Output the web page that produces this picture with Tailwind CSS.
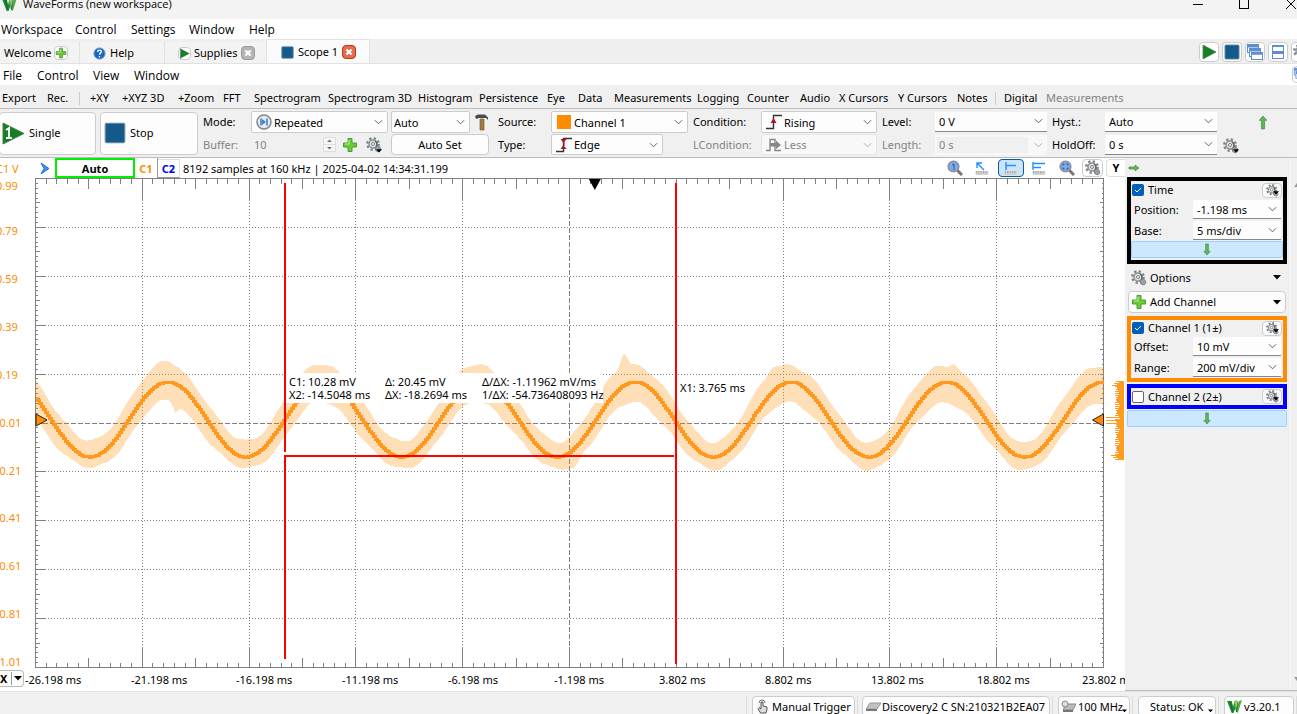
<!DOCTYPE html>
<html lang="en">
<head>
    <meta charset="UTF-8">
    <meta name="viewport" content="width=device-width, initial-scale=1.0">
    <title>WaveForms (new workspace)</title>
    <script src="https://cdn.jsdelivr.net/npm/@tailwindcss/browser@4"></script>
</head>
<body class="h-screen flex flex-col overflow-hidden bg-[#f0f0f0] text-black text-[11px] leading-4 font-['Noto_Sans',sans-serif] whitespace-nowrap">

    <!-- shared icons -->
    <svg class="hidden">
        <symbol id="chev" viewBox="0 0 10 6"><path d="M1 1l4 4 4-4" fill="none" stroke="#555" stroke-width="1"/></symbol>
        <symbol id="gear" viewBox="0 0 16 16">
            <g fill="none" stroke="#7d8488" stroke-width="2.6"><circle cx="7" cy="7" r="5.6" stroke-dasharray="2.2 2.2"/></g>
            <circle cx="7" cy="7" r="4" fill="#dfe3e4" stroke="#8f9699" stroke-width="1.6"/>
            <path d="M9 4a4 4 0 0 1 1 6" fill="none" stroke="#5c6367" stroke-width="1.4"/>
            <circle cx="7" cy="7" r="1.5" fill="#fff" stroke="#777e82"/>
            <path d="M11 9l3 1 1 3-2 2-3-1-1-3z" fill="#9aa1a4" stroke="#6a7175" stroke-width=".7"/>
        </symbol>
        <symbol id="drop" viewBox="0 0 8 5"><path d="M0 0h8L4 4.6z" fill="#000"/></symbol>
        <symbol id="plus" viewBox="0 0 16 16"><path d="M6 1.500h4V6h4.500v4H10v4.500H6V10H1.500V6H6z" fill="#6cc93a" stroke="#4a9e2a" stroke-width="1"/><path d="M7 3v4H3" fill="none" stroke="#b9eb92" stroke-width="1.200"/></symbol>
        <symbol id="play" viewBox="0 0 16 16"><path d="M2 1l13 7-13 7z" fill="#128023" stroke="#5a7d5c" stroke-width=".8"/></symbol>
        <symbol id="stop" viewBox="0 0 16 16"><rect x="1" y="1" width="14" height="14" rx="1" fill="#135a8a" stroke="#5f87a2" stroke-width="1"/></symbol>
        <symbol id="down" viewBox="0 0 8 14"><path d="M2.500 1h3v8h2L4 13 .5 9h2z" fill="#63b35a" stroke="#469145" stroke-width=".7"/></symbol>
        <symbol id="cross" viewBox="0 0 14 14"><path d="M4 4l6 6M10 4l-6 6" stroke="#fff" stroke-width="2.400"/></symbol>
        <symbol id="lens" viewBox="0 0 16 16"><path d="M10 10l5 5" stroke="#777" stroke-width="3"/><circle cx="6.500" cy="6.500" r="5.300" fill="#7eaae6" stroke="#8d9299" stroke-width="1.600"/></symbol>
        <symbol id="ruler" viewBox="0 0 16 5"><rect width="16" height="5" fill="#d3d3d3"/><path d="M1 0v3M4 0v3M7 0v3M10 0v3M13 0v3" stroke="#999"/></symbol>
        <symbol id="logo" viewBox="0 0 16 16"><path d="M0 2h5l1.500 6L8 3l3 1-4 11H5z" fill="#1f8a3c"/><path d="M7 5l2.500 8 2 2L16 1l-3 1-2 7z" fill="#4fae4a"/><path d="M7 2l4-1 1 4-2 4z" fill="#95cc5a"/><path d="M3 2l3 11M12 3l-2 11" stroke="#0d5a2a" stroke-width=".8"/></symbol>
        <symbol id="cascade" viewBox="0 0 18 18"><g fill="#fff" stroke="#5d8fd0" stroke-width="1"><rect x="1.500" y="1.500" width="11" height="8"/><path d="M1.500 3h11" stroke-width="3"/><rect x="3.500" y="5.500" width="11" height="8"/><path d="M3.500 7h11" stroke-width="3"/><rect x="5.500" y="9.500" width="11" height="7"/><path d="M5.500 10.500h11" stroke-width="2.500"/></g></symbol>
    </svg>

    <!-- title bar -->
    <header class="h-[19px] shrink-0 overflow-hidden bg-[#f3f3f3]">
        <div class="h-[30px] -mt-[11px] flex items-center pl-[2px]">
            <svg class="size-[15px] mr-[6px]"><use href="#logo"/></svg>
            <span class="font-['Open_Sans',sans-serif]">WaveForms (new workspace)</span>
            <div class="ml-auto flex items-center gap-[35px]">
                <button aria-label="Minimize"><svg width="11" height="12"><path d="M0 6.500h10" stroke="#000"/></svg></button>
                <button aria-label="Maximize"><svg width="11" height="12"><rect x=".5" y="1.500" width="9" height="9" fill="none" stroke="#000"/></svg></button>
                <button aria-label="Close"><svg width="12" height="12"><path d="M1 1l10 10M11 1L1 11" stroke="#000"/></svg></button>
            </div>
        </div>
    </header>

    <nav class="h-[20px] shrink-0 bg-white flex items-center text-[12px] pl-px pt-[2px] font-['Open_Sans',sans-serif]">
        <button class="w-[74px] text-left">Workspace</button>
        <button class="w-[56px] text-left">Control</button>
        <button class="w-[58px] text-left">Settings</button>
        <button class="w-[60px] text-left">Window</button>
        <button>Help</button>
    </nav>

    <!-- document tabs -->
    <div class="h-[25px] shrink-0 bg-[#efefef] border-b border-[#e2e2e2] flex items-end">
        <button class="w-[80px] h-[21px] flex items-center gap-[3px] pl-[4px] pt-px bg-[#f3f3f3] border-r border-[#e2e2e2]">Welcome
            <span class="size-[14px] bg-white border border-[#ccc] rounded-sm"><svg class="size-full"><use href="#plus"/></svg></span>
        </button>
        <button class="w-[85px] h-[21px] flex items-center gap-[4px] pl-[13px] pt-px bg-[#f3f3f3] border-r border-[#e2e2e2]">
            <svg class="size-[13px]" viewBox="0 0 14 14"><circle cx="7" cy="7" r="6.200" fill="#1b66c4" stroke="#9db9dc"/><path d="M5 5.500c0-3 4-2.600 4-.3C9 6.700 7 6.600 7 8.300M7 9.600v1.400" stroke="#fff" stroke-width="1.500" fill="none"/></svg>Help
        </button>
        <button class="w-[101px] h-[21px] flex items-center gap-[3px] pl-[13px] pt-px bg-[#f3f3f3]">
            <span class="size-[13px] bg-white border border-[#ccc] rounded-sm"><svg class="size-full"><use href="#play"/></svg></span>Supplies
            <svg class="size-[14px] bg-[#b5b5b5] border border-[#999] rounded-sm"><use href="#cross"/></svg>
        </button>
        <button class="w-[104px] h-[24px] flex items-center gap-[4px] pl-[14px] pt-px bg-[#fafafa] border border-b-0 border-[#e2e2e2]">
            <svg class="size-[13px]"><use href="#stop"/></svg>Scope 1
            <svg class="size-[14px] bg-[#e0704c] border border-[#c9301c] rounded-sm"><use href="#cross"/></svg>
        </button>
        <div class="ml-auto mb-px flex gap-[3px] -mr-[14px]">
            <button aria-label="Run all" class="size-5 p-px bg-white border border-[#ccc] rounded"><svg class="size-full"><use href="#play"/></svg></button>
            <button aria-label="Stop all" class="size-5 p-px bg-white border border-[#ccc] rounded"><svg class="size-full"><use href="#stop"/></svg></button>
            <button aria-label="Cascade" class="size-5 bg-white border border-[#ccc] rounded"><svg class="size-full"><use href="#cascade"/></svg></button>
            <button aria-label="Tile" class="size-5 bg-white border border-[#ccc] rounded"><svg class="size-full" viewBox="0 0 18 18"><g fill="#fff" stroke="#5d8fd0"><rect x="3.500" y="2.500" width="11" height="6"/><rect x="3.500" y="9.500" width="11" height="6"/><path d="M3 3h12M3 10h12" stroke-width="2"/></g></svg></button>
            <button aria-label="Options" class="size-5 p-px bg-white border border-[#ccc] rounded"><svg class="size-full"><use href="#gear"/></svg></button>
        </div>
    </div>

    <nav class="h-[22px] shrink-0 bg-white border-b border-[#f0f0f0] flex items-center text-[12px] pl-[3px] pt-[3px] font-['Open_Sans',sans-serif]">
        <button class="w-[34px] text-left">File</button>
        <button class="w-[56px] text-left">Control</button>
        <button class="w-[41px] text-left">View</button>
        <button>Window</button>
        <button aria-label="Undock" class="ml-auto -mr-[12px] mb-[3px] size-[17px] bg-white border border-[#ccc] rounded"><svg class="size-full"><use href="#cascade"/></svg></button>
    </nav>

    <!-- view toolbar -->
    <div class="h-[23px] shrink-0 border-b border-[#bbb] flex items-center pl-[2px] pt-[2px]">
        <button class="w-[45px] text-left">Export</button>
        <button class="w-[32px] text-left">Rec.</button>
        <span class="w-[11px] h-[13px] border-l border-[#ccc]"></span>
        <button class="w-[32px] text-left">+XY</button>
        <button class="w-[56px] text-left">+XYZ 3D</button>
        <button class="w-[45px] text-left">+Zoom</button>
        <button class="w-[31px] text-left">FFT</button>
        <button class="w-[74px] text-left">Spectrogram</button>
        <button class="w-[90px] text-left">Spectrogram 3D</button>
        <button class="w-[61px] text-left">Histogram</button>
        <button class="w-[68px] text-left">Persistence</button>
        <button class="w-[31px] text-left">Eye</button>
        <button class="w-[36px] text-left">Data</button>
        <button class="w-[83px] text-left">Measurements</button>
        <button class="w-[50px] text-left">Logging</button>
        <button class="w-[53px] text-left">Counter</button>
        <button class="w-[39px] text-left">Audio</button>
        <button class="w-[59px] text-left">X Cursors</button>
        <button class="w-[59px] text-left">Y Cursors</button>
        <button class="w-[38px] text-left">Notes</button>
        <span class="w-[9px] h-[13px] border-l border-[#ccc]"></span>
        <button class="w-[42px] text-left">Digital</button>
        <button class="text-[#838383]" disabled>Measurements</button>
    </div>

    <!-- acquisition and trigger controls -->
    <div class="h-[49px] shrink-0 border-b border-[#bbb] flex items-center">
        <button class="w-[97px] -ml-px h-[43px] flex items-center gap-[4px] pl-[2px] bg-[#fdfdfd] border border-[#ccc] rounded">
            <svg class="size-[23px]" viewBox="0 0 23 23"><path d="M1 1l21 10.500L1 22z" fill="#128023" stroke="#4d7850"/><path d="M4 8l3-2v10M4 16h6" stroke="#fff" stroke-width="2" fill="none"/></svg>Single
        </button>
        <button class="w-[98px] ml-[4px] h-[43px] flex items-center gap-[4px] pl-[3px] bg-[#fdfdfd] border border-[#ccc] rounded">
            <svg class="size-[22px]"><use href="#stop"/></svg>Stop
        </button>

        <div class="ml-[5px] grid grid-cols-[48px_137px] gap-y-px items-center">
            <label for="mode">Mode:</label>
            <div class="relative h-[22px] flex items-center pl-[4px] bg-[#fdfdfd] border border-[#ccc] rounded-xs">
                <svg class="size-4 shrink-0" viewBox="0 0 16 16"><circle cx="8" cy="8" r="7" fill="#e3ecf7" stroke="#80868c" stroke-width="1.500"/><path d="M5 4.500v7M11 4.500v7" stroke="#4a7fc0" stroke-width="1.600"/><path d="M6 5l4 3-4 3z" fill="#4a7fc0"/></svg>
                <select id="mode" class="appearance-none w-full h-full pl-[2px] pt-px"><option>Repeated</option></select>
                <svg class="absolute right-[4px] w-[9px] h-[6px] pointer-events-none"><use href="#chev"/></svg>
            </div>
            <label for="buffer" class="text-[#838383]">Buffer:</label>
            <div class="h-[21px] flex items-center">
                <input id="buffer" value="10" disabled class="w-[72px] pl-[3px] pt-px text-[#838383]">
                <svg class="w-[13px] h-[15px] mr-[6px] shrink-0" viewBox="0 0 13 15"><rect x=".5" y=".5" width="12" height="14" fill="#f6f6f6" stroke="#ddd"/><path d="M0 7.500h13" stroke="#ddd"/><path d="M4 5h5L6.500 2.500zM4 10h5l-2.500 2.500z" fill="#777"/></svg>
                <button aria-label="Add buffer"><svg class="size-4"><use href="#plus"/></svg></button>
                <button aria-label="Buffer options" class="ml-[8px] -mr-2 relative"><svg class="size-4"><use href="#gear"/></svg><svg class="absolute right-0 bottom-0 w-[6px] h-[4px]"><use href="#drop"/></svg></button>
            </div>
        </div>

        <div class="ml-[3px] flex flex-col gap-px">
            <div class="flex items-center">
                <div class="relative w-[79px] h-[22px] bg-[#fdfdfd] border border-[#ccc] rounded-xs flex items-center">
                    <select aria-label="Acquisition trigger" class="appearance-none w-full h-full pl-[2px] pt-px"><option>Auto</option></select>
                    <svg class="absolute right-[4px] w-[9px] h-[6px] pointer-events-none"><use href="#chev"/></svg>
                </div>
                <svg class="w-[13px] h-[17px] ml-[5px]" viewBox="0 0 13 17"><path d="M5 5h4v11H5z" fill="#a07c45" stroke="#7b5c30" stroke-width=".7"/><path d="M0 2l3-1.500h7l3 3V6l-2-2H4L1 5z" fill="#4b4b4b"/></svg>
            </div>
            <button class="w-[98px] h-[21px] bg-[#fdfdfd] border border-[#ccc] rounded">Auto Set</button>
        </div>

        <div class="ml-[9px] grid grid-cols-[53px_137px] gap-y-px items-center">
            <label for="source">Source:</label>
            <div class="relative h-[22px] flex items-center pl-[5px] bg-[#fdfdfd] border border-[#ccc] rounded-xs">
                <span class="size-[14px] shrink-0 bg-[#ff8c00]"></span>
                <select id="source" class="appearance-none w-full h-full pl-[3px] pt-px"><option>Channel 1</option></select>
                <svg class="absolute right-[4px] w-[9px] h-[6px] pointer-events-none"><use href="#chev"/></svg>
            </div>
            <label for="type">Type:</label>
            <div class="relative w-[112px] h-[21px] flex items-center pl-[4px] bg-[#fdfdfd] border border-[#ccc] rounded-xs">
                <svg class="size-4 shrink-0" viewBox="0 0 16 16"><path d="M0 14.500h7.500V1.500H16" fill="none" stroke="#333" stroke-width="1.400"/><path d="M4.500 2h6l-3 4zM4.500 12h6l-3-4zM7 4h1.500v6H7z" fill="#b31224"/></svg>
                <select id="type" class="appearance-none w-full h-full pl-[2px] pt-px"><option>Edge</option></select>
                <svg class="absolute right-[4px] w-[9px] h-[6px] pointer-events-none"><use href="#chev"/></svg>
            </div>
        </div>

        <div class="ml-[5px] grid grid-cols-[68px_116px] gap-y-px items-center">
            <label for="cond">Condition:</label>
            <div class="relative h-[22px] flex items-center pl-[4px] bg-[#fdfdfd] border border-[#ccc] rounded-xs">
                <svg class="size-4 shrink-0" viewBox="0 0 16 16"><path d="M0 14.500h7.500V1.500H16" fill="none" stroke="#333" stroke-width="1.400"/><path d="M4.500 9h6l-3-5z" fill="#b31224"/></svg>
                <select id="cond" class="appearance-none w-full h-full pl-[2px] pt-px"><option>Rising</option></select>
                <svg class="absolute right-[4px] w-[9px] h-[6px] pointer-events-none"><use href="#chev"/></svg>
            </div>
            <label for="lcond" class="text-[#838383]">LCondition:</label>
            <div class="relative h-[21px] flex items-center pl-[4px] bg-[#f8f8f8] border border-[#e6e6e6] rounded-xs text-[#838383]">
                <svg class="size-4 shrink-0" viewBox="0 0 16 16"><path d="M0 13.500h4v-11h5v11h6" fill="none" stroke="#888" stroke-width="1.400"/><path d="M4 6h6V3.500L15 8l-5 4V9.500H4z" fill="#888"/></svg>
                <select id="lcond" disabled class="appearance-none w-full h-full pl-[2px] pt-px"><option>Less</option></select>
                <svg class="absolute right-[4px] w-[9px] h-[6px] pointer-events-none opacity-50"><use href="#chev"/></svg>
            </div>
        </div>

        <div class="ml-[5px] grid grid-cols-[53px_112px] gap-y-[3px] items-center">
            <label for="level">Level:</label>
            <div class="relative h-[20px] flex items-center bg-[#fdfdfd] border-b border-[#888]">
                <select id="level" class="appearance-none w-full h-full pl-[4px] pt-[2px]"><option>0 V</option></select>
                <svg class="absolute right-[4px] w-[9px] h-[6px] pointer-events-none"><use href="#chev"/></svg>
            </div>
            <label for="length" class="text-[#838383]">Length:</label>
            <div class="relative h-[20px] flex items-center p-[2px] bg-[#f8f8f8] text-[#838383]">
                <select id="length" disabled class="appearance-none w-[91px] h-full pl-[2px] bg-[#f0f0f0]"><option>0 s</option></select>
                <svg class="absolute right-[4px] w-[9px] h-[6px] pointer-events-none opacity-50"><use href="#chev"/></svg>
            </div>
        </div>

        <div class="ml-[5px] grid grid-cols-[53px_112px] gap-y-[3px] items-center">
            <label for="hyst">Hyst.:</label>
            <div class="relative h-[20px] flex items-center bg-[#fdfdfd] border-b border-[#888]">
                <select id="hyst" class="appearance-none w-full h-full pl-[4px] pt-[2px]"><option>Auto</option></select>
                <svg class="absolute right-[4px] w-[9px] h-[6px] pointer-events-none"><use href="#chev"/></svg>
            </div>
            <label for="holdoff">HoldOff:</label>
            <div class="relative h-[20px] flex items-center bg-[#fdfdfd] border-b border-[#888]">
                <select id="holdoff" class="appearance-none w-full h-full pl-[4px] pt-[2px]"><option>0 s</option></select>
                <svg class="absolute right-[4px] w-[9px] h-[6px] pointer-events-none"><use href="#chev"/></svg>
            </div>
        </div>
        <button aria-label="Trigger options" class="ml-[6px] mb-[3px] relative self-end"><svg class="size-4"><use href="#gear"/></svg><svg class="absolute right-0 bottom-px w-[6px] h-[4px]"><use href="#drop"/></svg></button>
        <button aria-label="Collapse" class="ml-[19px] mt-[6px] self-start"><svg class="w-[10px] h-[15px] rotate-180"><use href="#down"/></svg></button>
    </div>

    <main class="flex-1 min-h-0 flex">
        <!-- scope view -->
        <section class="flex-1 min-w-0 flex flex-col bg-white">
            <div class="h-5 shrink-0 flex items-center">
                <span class="w-[44px] -ml-[4px] pt-px text-[#ff8c00]">C1 V</span>
                <svg class="w-[10px] h-[13px] mr-[5px]" viewBox="0 0 10 13"><path d="M1 1l3 5.500L1 12l8-5.500z" fill="#3f8ff0" stroke="#1f6fd6"/></svg>
                <div class="w-[80px] h-5 pt-px border-2 border-[#00f000] text-center font-bold font-['Open_Sans',sans-serif]">Auto</div>
                <button class="w-[23px] h-5 pt-px font-bold text-[#ff8c00] border-r border-[#999]">C1</button>
                <button class="w-[22px] h-[19px] pt-px font-bold text-[#0000ee] border border-l-0 border-[#ddd] border-b-[#999] leading-4">C2</button>
                <span class="ml-[3px] pt-px">8192 samples at 160 kHz | 2025-04-02 14:34:31.199</span>
                <div class="ml-auto flex items-center">
                    <button aria-label="Zoom one" class="w-[28px]"><svg class="size-4" viewBox="0 0 16 16"><use href="#lens"/><path d="M5 5l2-1v6" stroke="#2a50a8" fill="none"/></svg></button>
                    <button aria-label="Free cursor" class="w-[23px]"><svg class="w-[14px] h-[13px]" viewBox="0 0 14 13"><path d="M2 1l7 7M2 6V1h5" stroke="#1e90ff" stroke-width="1.400" fill="none"/><use href="#ruler" y="9" width="14" height="4"/></svg></button>
                    <button aria-label="Delta cursor" class="w-[26px] h-[18px] flex items-center justify-center bg-[#cce4f7] border border-[#0a5a9c] rounded"><svg class="w-[14px] h-[13px]" viewBox="0 0 14 13"><path d="M2 0v8M2 3.500h10" stroke="#1e90ff" stroke-width="1.400"/><use href="#ruler" y="9" width="14" height="4"/></svg></button>
                    <button aria-label="Vertical cursor" class="w-[35px] pl-[8px]"><svg class="w-[14px] h-[13px]" viewBox="0 0 14 13"><path d="M1 0v8M1 1.500h12M1 5.500h8" stroke="#1e90ff" stroke-width="1.400"/><use href="#ruler" y="9" width="14" height="4"/></svg></button>
                    <button aria-label="Zoom fit" class="w-[23px]"><svg class="size-4" viewBox="0 0 16 16"><use href="#lens"/><path d="M4 5.500V4h1.500M7.500 4H9v1.500M9 7.500V9H7.500M5.500 9H4V7.500" stroke="#2a50a8" fill="none"/></svg></button>
                    <button aria-label="View options" class="w-[21px] h-[18px] flex justify-center border border-[#ccc] rounded"><svg class="size-4"><use href="#gear"/></svg></button>
                    <button class="w-[19px] h-[18px] ml-[3px] font-bold border border-r-0 border-[#ddd] rounded-l">Y</button>
                </div>
            </div>
            <div id="plot" class="flex-1 min-h-0 relative">
                <div id="readout" class="absolute bg-white grid grid-cols-[96px_97px_121px] leading-[13px] pl-[3px] py-[2px]">
                    <span>C1: 10.28 mV</span><span>Δ: 20.45 mV</span><span>Δ/ΔX: -1.11962 mV/ms</span>
                    <span>X2: -14.5048 ms</span><span>ΔX: -18.2694 ms</span><span>1/ΔX: -54.736408093 Hz</span>
                </div>
                <button class="absolute left-0 bottom-[4px] w-[24px] h-[17px] flex items-center bg-[#fdfdfd] border border-l-0 border-[#bbb] rounded-r font-bold">X<span class="h-[13px] ml-[4px] mr-[2px] border-l border-[#999]"></span><svg class="w-[8px] h-[5px]"><use href="#drop"/></svg></button>
            </div>
        </section>

        <!-- side panel -->
        <aside class="w-[172px] shrink-0 border-b border-[#bbb] bg-[#f0f0f0] flex">
            <div class="w-[162px] pl-[2px]">
                <div class="h-[19px] flex items-center pl-px"><button aria-label="Hide panel"><svg class="w-[12px] h-[8px]" viewBox="0 0 12 8"><path d="M1 3h6V1l4 3-4 3V5H1z" fill="#63b35a" stroke="#469145" stroke-width=".7"/></svg></button></div>

                <div class="h-[87px] border-4 border-black">
                    <div class="h-[18px] flex items-center pl-px">
                        <label class="flex items-center gap-[4px]"><input type="checkbox" checked class="sr-only"><svg class="size-[12px]" viewBox="0 0 12 12"><rect width="12" height="12" rx="2" fill="#005fb8"/><path d="M3 6l2 2 4-4" stroke="#fff" fill="none"/></svg>Time</label>
                        <button aria-label="Time options" class="ml-auto mr-px w-[20px] h-[15px] flex items-center justify-center relative bg-[#fafafa] border border-[#ccc] rounded"><svg class="size-[13px]"><use href="#gear"/></svg><svg class="absolute right-[2px] bottom-[2px] w-[6px] h-[4px]"><use href="#drop"/></svg></button>
                    </div>
                    <div class="h-[21px] flex items-center pl-[3px] pr-[2px]"><label for="pos" class="w-[59px]">Position:</label>
                        <div class="relative flex-1 h-[19px] bg-[#fdfdfd] border-b border-[#888] flex items-center"><select id="pos" class="appearance-none w-full h-full pl-[4px] pt-px"><option>-1.198 ms</option></select><svg class="absolute right-[4px] w-[9px] h-[6px] pointer-events-none"><use href="#chev"/></svg></div>
                    </div>
                    <div class="h-[21px] flex items-center pl-[3px] pr-[2px]"><label for="base" class="w-[59px]">Base:</label>
                        <div class="relative flex-1 h-[19px] bg-[#fdfdfd] border-b border-[#888] flex items-center"><select id="base" class="appearance-none w-full h-full pl-[4px] pt-px"><option>5 ms/div</option></select><svg class="absolute right-[4px] w-[9px] h-[6px] pointer-events-none"><use href="#chev"/></svg></div>
                    </div>
                    <button aria-label="More time settings" class="w-full h-[17px] flex items-center justify-center bg-[#cce8ff] border border-[#99d1ff] rounded-xs"><svg class="w-[8px] h-[13px]"><use href="#down"/></svg></button>
                </div>

                <button class="w-full h-[27px] flex items-center pl-[4px] pr-[6px]"><svg class="size-4 mr-[3px]"><use href="#gear"/></svg>Options<svg class="ml-auto w-[8px] h-[5px]"><use href="#drop"/></svg></button>
                <button class="w-[158px] h-[22px] mx-px flex items-center pl-[2px] pr-[4px] bg-[#fdfdfd] border border-[#ccc] rounded"><svg class="size-4 mr-[3px]"><use href="#plus"/></svg>Add Channel<svg class="ml-auto w-[8px] h-[5px]"><use href="#drop"/></svg></button>

                <div class="h-[66px] mt-[3px] border-4 border-[#ff8c00]">
                    <div class="h-[16px] flex items-center pl-px">
                        <label class="flex items-center gap-[4px]"><input type="checkbox" checked class="sr-only"><svg class="size-[12px]" viewBox="0 0 12 12"><rect width="12" height="12" rx="2" fill="#005fb8"/><path d="M3 6l2 2 4-4" stroke="#fff" fill="none"/></svg>Channel 1 (1±)</label>
                        <button aria-label="Channel 1 options" class="ml-auto mr-px w-[20px] h-[15px] flex items-center justify-center relative bg-[#fafafa] border border-[#ccc] rounded"><svg class="size-[13px]"><use href="#gear"/></svg><svg class="absolute right-[2px] bottom-[2px] w-[6px] h-[4px]"><use href="#drop"/></svg></button>
                    </div>
                    <div class="h-[21px] flex items-center pl-[3px] pr-[2px]"><label for="offset" class="w-[59px]">Offset:</label>
                        <div class="relative flex-1 h-[19px] bg-[#fdfdfd] border-b border-[#888] flex items-center"><select id="offset" class="appearance-none w-full h-full pl-[4px] pt-px"><option>10 mV</option></select><svg class="absolute right-[4px] w-[9px] h-[6px] pointer-events-none"><use href="#chev"/></svg></div>
                    </div>
                    <div class="h-[21px] flex items-center pl-[3px] pr-[2px]"><label for="range" class="w-[59px]">Range:</label>
                        <div class="relative flex-1 h-[19px] bg-[#fdfdfd] border-b border-[#888] flex items-center"><select id="range" class="appearance-none w-full h-full pl-[4px] pt-px"><option>200 mV/div</option></select><svg class="absolute right-[4px] w-[9px] h-[6px] pointer-events-none"><use href="#chev"/></svg></div>
                    </div>
                </div>

                <div class="h-[25px] mt-[2px] pl-px border-4 border-[#0000ff] flex items-center">
                    <input id="ch2" type="checkbox" class="appearance-none size-[12px] bg-white border border-[#666] rounded-xs">
                    <label for="ch2" class="ml-[4px]">Channel 2 (2±)</label>
                    <button aria-label="Channel 2 options" class="ml-auto mr-px w-[20px] h-[15px] flex items-center justify-center relative bg-[#fafafa] border border-[#ccc] rounded"><svg class="size-[13px]"><use href="#gear"/></svg><svg class="absolute right-[2px] bottom-[2px] w-[6px] h-[4px]"><use href="#drop"/></svg></button>
                </div>
                <button aria-label="More channel settings" class="w-full h-[17px] mt-px flex items-center justify-center bg-[#cce8ff] border border-[#99d1ff] rounded-xs"><svg class="w-[8px] h-[13px]"><use href="#down"/></svg></button>
            </div>
            <div class="flex-1 ml-[3px] border-l border-[#f8f8f8] flex flex-col justify-between items-end pt-[24px] pb-[8px]">
                <svg width="3" height="6"><path d="M0 5l3-4v4z" fill="#999"/></svg>
                <svg width="3" height="6"><path d="M0 1l3 4V1z" fill="#999"/></svg>
            </div>
        </aside>
    </main>

    <!-- status bar -->
    <footer class="h-[23px] shrink-0 border-t border-[#e4e4e4] flex items-start justify-end gap-[2px] pt-[4px] bg-[#f0f0f0]">
        <div class="pl-[5px] border-l border-[#ddd]"><button class="w-[103px] h-[21px] flex items-center gap-[4px] pl-[4px] bg-[#fdfdfd] border border-[#ccc] rounded"><svg class="w-[11px] h-[15px]" viewBox="0 0 11 15"><path d="M4 3v7L2 8.500 1 9.500 3.500 14H9l1-4V8L6 7V3z" fill="#ddd" stroke="#555"/><path d="M2 4a3 3 0 0 1 6 0" fill="none" stroke="#777"/></svg>Manual Trigger</button></div>
        <div class="pl-[4px] border-l border-[#ddd]"><button class="w-[188px] h-[21px] flex items-center gap-px pl-[3px] bg-[#fdfdfd] border border-[#ccc] rounded"><svg class="w-[15px] h-[10px]" viewBox="0 0 15 10"><path d="M4 1h11l-4 6H0z" fill="#c2c2c2" stroke="#999"/><path d="M0 7h11v2H0z" fill="#777"/></svg>Discovery2 C SN:210321B2EA07</button></div>
        <div class="pl-[5px] border-l border-[#ddd]"><button class="relative w-[72px] h-[21px] flex items-center gap-[2px] pl-[2px] bg-[#fdfdfd] border border-[#ccc] rounded"><svg class="w-[15px] h-[13px]" viewBox="0 0 15 13"><path d="M5 4h10l-3 6H2z" fill="#bbb" stroke="#888"/><path d="M2 10h10v2H2z" fill="#777"/><circle cx="4" cy="4" r="3" fill="#ddd" stroke="#888"/></svg>100 MHz<svg class="absolute right-[2px] bottom-[3px] w-[5px] h-[4px]"><use href="#drop"/></svg></button></div>
        <div class="pl-[5px] border-l border-[#ddd]"><button class="relative w-[78px] h-[21px] flex items-center pl-[11px] bg-[#fdfdfd] border border-[#ccc] rounded">Status: OK<svg class="absolute right-[2px] bottom-[3px] w-[5px] h-[4px]"><use href="#drop"/></svg></button></div>
        <div class="pl-[5px] border-l border-[#ddd]"><button class="w-[70px] h-[21px] flex items-center gap-[2px] pl-[2px] bg-[#fdfdfd] border border-[#ccc] rounded"><svg class="size-[15px]"><use href="#logo"/></svg>v3.20.1</button></div>
        <span class="w-px h-5 bg-[#ddd]"></span>
    </footer>

    <script>
        const LEFT = 35.5, AMP = 0.0767, GRAY = '#808080';
        // envelope spikes: x as part of the width, reach in px, height, side (-1 is up)
        const SPIKES = [[0.123, 16, 3, -1], [0.131, 5, 8, 1], [0.551, 7, 15, -1], [0.69, 8, 5, -1], [0.86, 6, 5, -1], [0.505, 8, 5, 1]];

        function drawPlot() {
            let box = document.getElementById("plot");
            let old = box.querySelector("svg.scope");
            if (old) old.remove();
            let W = box.clientWidth, H = box.clientHeight;
            let w = W - 21 - LEFT - 0.5, h = H - 24;
            if (w < 100 || h < 100) return;
            let top = 0.5, right = LEFT + w, bottom = top + h;
            let px = v => Math.round(v - 0.5) + 0.5;
            let line = (x1, y1, x2, y2, extra) => `<line x1="${x1}" y1="${y1}" x2="${x2}" y2="${y2}" ${extra || ''}/>`;
            let s = '';

            // grid and ticks
            s += `<g stroke="${GRAY}" shape-rendering="crispEdges">`;
            s += `<rect x="${LEFT}" y="${top}" width="${w}" height="${h}" fill="none"/>`;
            for (let i = 1; i < 100; i++) {
                let x = px(LEFT + w * i / 100), y = px(top + h * i / 100);
                let lx = i % 10 == 0 ? 21 : i % 5 == 0 ? 10 : 5;
                let ly = i % 10 == 0 ? 9 : i % 5 == 0 ? 4 : 2;
                s += line(x, top, x, top + lx) + line(x, bottom, x, bottom - lx);
                s += line(LEFT, y, LEFT + ly, y) + line(right, y, right - Math.min(ly, 4), y);
                if (i % 10 == 0) {
                    let dash = i == 50 ? 'stroke-dasharray="5 2"' : 'stroke-dasharray="1 2"';
                    s += line(x, top, x, bottom, dash) + line(LEFT, y, right, y, dash);
                }
            }
            s += '</g>';

            // waveform with its noise envelope
            let mid = top + h * 0.492, amp = h * AMP, period = w * 0.1458;
            let wave = x => mid - amp * Math.cos((x - LEFT - w * 0.1233) / period * 2 * Math.PI);
            let noise = x => Math.sin(x * 0.21) * 1.2 + Math.sin(x * 0.083 + 1) * 1.6;
            let up = [], low = [], trace = '';
            for (let x = LEFT; x <= right; x += 2) {
                let y = wave(x), part = (x - LEFT) / w, k = (mid - y) / amp;
                let slope = 2.5 * (1 - k * k);
                let a = 16 + k + slope + noise(x), b = 16 + 4 * k + slope + noise(x + 40);
                for (let [sx, reach, size, side] of SPIKES) {
                    let d = Math.max(0, 1 - Math.abs(part - sx) * w / reach) * size;
                    if (side < 0) a += d; else b += d;
                }
                up.push(`${x},${Math.round(y - a)}`);
                low.unshift(`${x},${Math.round(y + b)}`);
                trace += (trace ? 'H' + x + 'V' + Math.round(y) : 'M' + x + ' ' + Math.round(y));
            }
            s += `<polygon points="${up.join(' ')} ${low.join(' ')}" fill="#ff8c00" fill-opacity=".28"/>`;
            s += `<path d="${trace}" fill="none" stroke="#ff981c" stroke-width="3" shape-rendering="crispEdges"/>`;

            // histogram on the right edge
            let n = Math.round(amp * 2) + 4, hy = mid - amp - 1;
            for (let i = 0; i < n; i++) {
                let edge = Math.min(i, n - i);
                let len = edge < 6 ? 8 + edge - (i % 2) * 4 : 4 + Math.abs(Math.sin(i * 1.7)) * 5;
                if (Math.abs(i - n / 2) < 4 && i % 3 == 0) len = 18;
                s += `<rect x="${W - 1 - Math.round(len)}" y="${Math.round(hy + i)}" width="${Math.round(len)}" height="1" fill="#ff9b1f"/>`;
            }

            // cursors
            let x2 = Math.round(LEFT + w * 0.2336), x1 = Math.round(LEFT + w * 0.5997), cy = Math.round(top + h * 0.568);
            s += '<g stroke="#ff0000" stroke-width="2" shape-rendering="crispEdges">';
            s += line(x2, 5, x2, cy - 4) + line(x2, cy - 1, x2, bottom - 9) + line(x1, 5, x1, bottom - 4) + line(x2, cy, x1 - 2, cy) + '</g>';
            let my = Math.round(mid) + 1;
            s += `<path d="M${LEFT + w * 0.5237 - 6} 1h12l-6 11z"/>`;
            s += `<path d="M36 ${my - 6}l11 6-11 6z" fill="#ff8c00" stroke="#222"/>`;
            s += `<path d="M${right} ${my - 6}l-11 6 11 6z" fill="#ff8c00" stroke="#222"/>`;

            // axis labels
            for (let i = 0; i <= 10; i++) {
                let ly = i == 0 ? 12 : h * 0.098 * i + 9;
                s += `<text x="-4" y="${Math.round(ly)}" fill="#ff8c00">${(0.99 - i * 0.2).toFixed(2)}</text>`;
                s += `<text x="${Math.round(25 + w * 0.099 * i)}" y="${H - 7}">${(-26.198 + i * 5).toFixed(3)} ms</text>`;
            }
            s += `<text x="${x1 + 4}" y="${Math.round(h * 0.4335 + 2)}">X1: 3.765 ms</text>`;

            box.insertAdjacentHTML('afterbegin', `<svg class="scope absolute inset-0 size-full">${s}</svg>`);
            let r = document.getElementById("readout");
            r.style.left = (x2 + 1) + 'px';
            r.style.top = Math.round(h * 0.398) + 'px';
        }

        drawPlot();
        new ResizeObserver(drawPlot).observe(document.getElementById("plot"));
        window.addEventListener("load", drawPlot);
    </script>
</body>
</html>
